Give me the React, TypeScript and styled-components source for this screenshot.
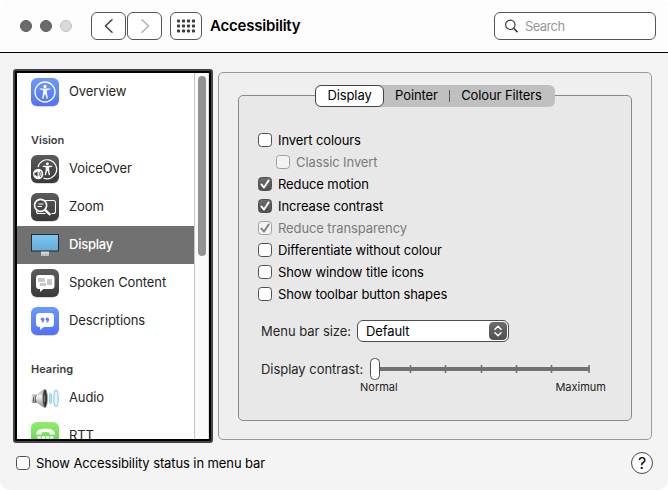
import React from 'react'
import styled, { createGlobalStyle, css } from 'styled-components'

const GlobalStyle = createGlobalStyle`
    * {
        box-sizing: border-box;
    }

    body {
        margin: 0;
        background: #fff;
        font-family: Inter, 'Liberation Sans', sans-serif;
        font-size: 13px;
        color: #000;
    }
`

const Window = styled.div`
    width: 668px;
    height: 490px;
    display: flex;
    flex-direction: column;
    background: #f4f4f4;
    border-radius: 10px;
    overflow: hidden;
`

const Toolbar = styled.header`
    height: 53px;
    flex: none;
    display: flex;
    align-items: center;
    padding: 0 12px 0 20px;
    background: #fdfdfd;
    border-bottom: 1px solid #000;
`

const Lights = styled.div`
    display: flex;
    gap: 8px;
    margin-right: 19px;
`

const Light = styled.span<{ $off?: boolean }>`
    width: 12px;
    height: 12px;
    border-radius: 50%;
    background: ${p => (p.$off ? '#dadada' : '#6b6b6b')};
    border: 1px solid ${p => (p.$off ? '#c2c2c2' : '#5c5c5c')};
`

const ToolButton = styled.button<{ $width: number; $gap: number }>`
    width: ${p => p.$width}px;
    height: 28px;
    margin: 0 ${p => p.$gap}px 0 0;
    padding: 0;
    display: flex;
    align-items: center;
    justify-content: center;
    background: #fff;
    border: 1px solid #555;
    border-radius: 6px;
`

const Title = styled.h1`
    margin: 0;
    flex: 1;
    font-size: 15px;
    line-height: 18px;
    padding-bottom: 1px;
    font-weight: 600;
    letter-spacing: -0.2px;
`

const SearchField = styled.div`
    width: 162px;
    height: 28px;
    display: flex;
    align-items: center;
    gap: 7px;
    padding-left: 10px;
    background: #fff;
    border: 1px solid #555;
    border-radius: 6px;
    color: #999;
    letter-spacing: -0.6px;
`

const Main = styled.main`
    display: flex;
    gap: 5px;
    padding: 16px 16px 0 13px;
`

const Sidebar = styled.nav`
    width: 200px;
    height: 374px;
    display: flex;
    border: 2px solid #444;
    border-radius: 3px;
    background: #000;
    padding: 2px;
`

const List = styled.div`
    flex: 1;
    overflow: hidden;
    background: #fff;
`

const Heading = styled.div`
    height: 39px;
    padding: 22px 0 0 14px;
    font-size: 11px;
    line-height: 15px;
    font-weight: 600;
    color: #3c3c3c;
`

const Item = styled.div<{ $selected?: boolean }>`
    height: 38px;
    display: flex;
    align-items: center;
    gap: 10px;
    padding-left: 14px;
    color: #262626;
    letter-spacing: -0.1px;

    svg {
        flex: none;
        overflow: visible;
    }

    span {
        margin-top: -2px;
    }

    ${p =>
        p.$selected &&
        css`
            background: #717171;
            color: #fff;

            span {
                font-weight: 500;
                letter-spacing: -0.25px;
            }
        `}
`

const ScrollTrack = styled.div`
    width: 15px;
    padding: 3px 2px 0 3px;
    background: #fafafa;
    border-left: 1px solid #c6c6c6;
    border-right: 1px solid #dedede;
`

const ScrollThumb = styled.div`
    width: 8px;
    height: 180px;
    border-radius: 4px;
    background: #929292;
`

const Panel = styled.section`
    width: 434px;
    height: 368px;
    margin-top: 3px;
    padding: 12px 19px 18px;
    display: flex;
    flex-direction: column;
    align-items: center;
    background: #efefef;
    border: 1px solid #999;
    border-radius: 5px;
`

const Tabs = styled.div`
    height: 22px;
    display: flex;
    align-items: center;
    background: #c0c0c0;
    border-radius: 6px;
    width: 240px;
    z-index: 1;
    letter-spacing: -0.1px;
`

const Tab = styled.div<{ $width: number; $active?: boolean }>`
    width: ${p => p.$width}px;
    height: 22px;
    line-height: 19px;
    text-align: center;
    border-radius: 6px;
    border: 1px solid ${p => (p.$active ? '#444' : 'transparent')};
    background: ${p => (p.$active ? '#fff' : 'transparent')};
`

const TabDivider = styled.span`
    width: 1px;
    height: 12px;
    background: #555;
`

const Group = styled.div`
    width: 394px;
    height: 326px;
    margin-top: -12px;
    flex: none;
    padding: 33px 0 0 19px;
    background: #e8e8e8;
    border: 1px solid #8a8a8a;
    border-radius: 5px;
`

const CheckRow = styled.label<{ $indent?: boolean; $disabled?: boolean }>`
    height: 22px;
    display: flex;
    align-items: center;
    gap: 6px;
    padding-left: ${p => (p.$indent ? 18 : 0)}px;
    color: ${p => (p.$disabled ? '#7b7b7b' : '#000')};
    letter-spacing: -0.1px;
    white-space: nowrap;
`

const Box = styled.span<{ $checked?: boolean; $disabled?: boolean }>`
    width: 14px;
    height: 14px;
    flex: none;
    display: flex;
    border: 1px solid #4e4e4e;
    border-radius: 3.5px;
    background: ${p => (p.$checked ? 'linear-gradient(#6c6c6c, #505050)' : '#fff')};

    ${p =>
        p.$disabled &&
        css`
            border-color: #a0a0a0;
            background: #f3f3f3;
        `}
`

const Field = styled.div<{ $top: number }>`
    height: 22px;
    margin-top: ${p => p.$top}px;
    padding-left: 3px;
    display: flex;
    align-items: center;
    color: #262626;
`

const FieldLabel = styled.span<{ $width: number }>`
    width: ${p => p.$width}px;
    padding-bottom: 1px;
    white-space: nowrap;
    letter-spacing: -0.04px;
`

const Select = styled.div`
    width: 152px;
    height: 22px;
    display: flex;
    align-items: center;
    justify-content: space-between;
    padding: 0 1px 0 8px;
    background: #fff;
    border: 1px solid #4e4e4e;
    border-radius: 6px;
    color: #000;
    letter-spacing: -0.1px;
`

const Stepper = styled.span`
    width: 18px;
    height: 18px;
    display: flex;
    border-radius: 4.5px;
    background: linear-gradient(#6c6c6c, #505050);
`

const SliderLabels = styled.div`
    display: flex;
    justify-content: space-between;
    width: 246px;
    margin-left: 102px;
    font-size: 11px;
    line-height: 14px;
    color: #1c1c1c;
`

const Footer = styled.footer`
    display: flex;
    align-items: center;
    justify-content: space-between;
    padding: 9px 15px 0 16px;
`

const Help = styled.button`
    width: 22px;
    height: 22px;
    padding: 0;
    border: 1px solid #4a4a4a;
    border-radius: 50%;
    background: #fff;
    font: 400 16px/20px Inter, sans-serif;
    color: #000;
`

interface TileProps {
    id: string
    from: string
    to: string
    children: React.ReactNode
}

const Tile: React.FC<TileProps> = ({ id, from, to, children }) => (
    <svg width="28" height="28" viewBox="0 0 28 28" fill="none">
        <defs>
            <linearGradient id={id} x1="0" y1="0" x2="0" y2="1">
                <stop stopColor={from} />
                <stop offset="1" stopColor={to} />
            </linearGradient>
        </defs>
        <rect y="0.8" width="28" height="28" rx="6" fill="#000" opacity="0.2" />
        <rect width="28" height="28" rx="6" fill={`url(#${id})`} />
        {children}
    </svg>
)

const Person = () => (
    <g fill="#fff">
        <circle cx="0" cy="-5.6" r="1.6" />
        <path d="M-5.2-3.6 H5.2 V-2.4 L1.9-1.8 V1 L2.9 6.5 L1.6 6.8 L.3 2 H-.3 L-1.6 6.8 L-2.9 6.5 L-1.9 1 V-1.8 L-5.2-2.4Z" />
    </g>
)

const OverviewIcon = () => (
    <Tile id="overview" from="#6b99ff" to="#5271fb">
        <circle cx="14" cy="14" r="10" stroke="#fff" strokeWidth="1.3" />
        <g transform="translate(14 14)">
            <Person />
        </g>
    </Tile>
)

const VoiceOverIcon = () => (
    <Tile id="voiceover" from="#5b5b5d" to="#393939">
        <path d="M7 12 A9.5 9.5 0 1 1 12.5 23" stroke="#fff" strokeWidth="1.2" />
        <g transform="translate(16.4 14) scale(.92)">
            <Person />
        </g>
        <circle cx="7.2" cy="19" r="5.2" fill="#fff" />
        <path d="M3.4 17.8h1.2l2-1.6v5.6l-2-1.6H3.4z" fill="#444" />
        <path d="M8 17.2q1 1.8 0 3.6M9.4 16q1.8 3 0 6" stroke="#444" strokeWidth="0.8" />
    </Tile>
)

const ZoomIcon = () => (
    <Tile id="zoom" from="#5b5b5d" to="#393939">
        <path d="M14 7.5h8.5a2 2 0 0 1 2 2v9a2 2 0 0 1-2 2h-2M5.5 18v.5a2 2 0 0 0 2 2h7" stroke="#fff" strokeWidth="1.1" />
        <circle cx="9.6" cy="12.4" r="6" fill="#484848" stroke="#fff" strokeWidth="1.6" />
        <path d="M14 16.8 L19.4 22" stroke="#fff" strokeWidth="2.4" />
        <path d="M7.5 11h5M6.5 13.5h4.5" stroke="#fff" strokeWidth="1.1" />
    </Tile>
)

const DisplayIcon = () => (
    <svg width="28" height="28" viewBox="0 0 28 28" fill="none">
        <defs>
            <linearGradient id="screen" x1="0" y1="0" x2="0" y2="1">
                <stop stopColor="#7cc8f3" />
                <stop offset="1" stopColor="#67a9d6" />
            </linearGradient>
        </defs>
        <rect x="10" y="20" width="8" height="5" fill="#d9d9d9" />
        <path d="M10 22.8h8V25h-8z" fill="#bdbdbd" />
        <rect x="0.5" y="3.5" width="27" height="16.5" fill="url(#screen)" stroke="#252b30" />
    </svg>
)

const SpokenIcon = () => (
    <Tile id="spoken" from="#5b5b5d" to="#393939">
        <path d="M8 6h12.5a3 3 0 0 1 3 3v8a3 3 0 0 1-3 3H12.5L9 23v-3H8a3 3 0 0 1-3-3V9a3 3 0 0 1 3-3z" fill="#fff" />
        <path d="M7 9h7v4H7zM16 10h5v6h-5zM9 14h6v3H9z" fill="#c8c8c8" />
    </Tile>
)

const DescriptionsIcon = () => (
    <Tile id="descriptions" from="#6b99ff" to="#5271fb">
        <path d="M8.5 6h11a3.5 3.5 0 0 1 3.5 3.5v7a3.5 3.5 0 0 1-3.5 3.5H13L9 23v-3h-.5A3.5 3.5 0 0 1 5 16.5v-7A3.5 3.5 0 0 1 8.5 6z" fill="#fff" />
        <circle cx="11.5" cy="12.3" r="1.7" fill="#5a80fc" />
        <circle cx="16.3" cy="12.3" r="1.7" fill="#5a80fc" />
        <path d="M12.7 12.3q0 2.5-1.9 3M17.5 12.3q0 2.5-1.9 3" stroke="#5a80fc" strokeWidth="1.1" />
    </Tile>
)

const AudioIcon = () => (
    <svg width="28" height="28" viewBox="0 0 28 28" fill="none">
        <defs>
            <linearGradient id="cone" x1="0" y1="0" x2="0" y2="1">
                <stop stopColor="#a0a0a0" />
                <stop offset="0.4" stopColor="#f4f4f4" />
                <stop offset="1" stopColor="#808080" />
            </linearGradient>
        </defs>
        <path d="M1.5 10.5 H6 V19 H1.5 Q-.6 14.8 1.5 10.5z" fill="url(#cone)" />
        <path d="M2.5 13v4M4.3 12v6" stroke="#444" strokeWidth="0.9" />
        <path d="M6 10 L13.5 5 V24 L6 19z" fill="url(#cone)" />
        <ellipse cx="14" cy="14.5" rx="2.5" ry="9.3" fill="#333" stroke="#a7a7a7" strokeWidth="0.8" />
        <ellipse cx="13.4" cy="14.5" rx="0.9" ry="4" fill="#777" />
        <ellipse cx="19.5" cy="14.5" rx="1.3" ry="5.3" fill="#b4e0f0" stroke="#8cc6db" strokeWidth="0.8" />
        <ellipse cx="25" cy="14.3" rx="2.2" ry="8.2" fill="#e4f7fc" stroke="#93cbe0" strokeWidth="1.2" />
    </svg>
)

const RttIcon = () => (
    <Tile id="rtt" from="#96eb70" to="#4fcf45">
        <path d="M5 12.5 Q4.8 6.5 14.5 6.5 T24 12.5 H18.5 V10.5 Q14.5 9.5 10.5 10.5 V12.5z" fill="#fff" />
        <path d="M6.5 15.5h16" stroke="#fff" strokeWidth="2.4" strokeDasharray="3.2 1" />
        <path d="M6.5 19h16" stroke="#fff" strokeWidth="2.4" strokeDasharray="3.2 1" />
    </Tile>
)

const Tick = ({ color = '#fff' }: { color?: string }) => (
    <svg width="12" height="12" viewBox="0 0 12 12" fill="none">
        <path d="M2.4 6.4 L5 9.6 L9.6 2.4" stroke={color} strokeWidth="1.9" strokeLinecap="round" strokeLinejoin="round" />
    </svg>
)

const options = [
    { label: 'Invert colours' },
    { label: 'Classic Invert', indent: true, disabled: true },
    { label: 'Reduce motion', checked: true },
    { label: 'Increase contrast', checked: true },
    { label: 'Reduce transparency', checked: true, disabled: true },
    { label: 'Differentiate without colour' },
    { label: 'Show window title icons' },
    { label: 'Show toolbar button shapes' },
]

const ticks = [40.5, 75.5, 111.5, 146.5, 181.5, 219]

const Slider = () => (
    <svg width="222" height="22" viewBox="0 0 222 22" fill="none">
        <path d="M6 11H220" stroke="#70726f" strokeWidth="4" />
        {ticks.map(x => (
            <path key={x} d={`M${x} 7v8`} stroke="#70726f" strokeWidth="1.6" />
        ))}
        <rect x="0.5" y="0.5" width="9" height="21" rx="4" fill="#fff" stroke="#4e4e4e" />
    </svg>
)

const App: React.FC = () => (
    <>
        <GlobalStyle />
        <Window>
            <Toolbar>
                <Lights>
                    <Light />
                    <Light />
                    <Light $off />
                </Lights>
                <ToolButton $width={35} $gap={1}>
                    <svg width="10" height="16" viewBox="0 0 10 16" fill="none">
                        <path d="M8 1.8 L1.4 8 L8 14.2" stroke="#3c3c3c" strokeWidth="1.5" strokeLinecap="round" strokeLinejoin="round" />
                    </svg>
                </ToolButton>
                <ToolButton $width={35} $gap={8}>
                    <svg width="10" height="16" viewBox="0 0 10 16" fill="none">
                        <path d="M2 1.8 L8.6 8 L2 14.2" stroke="#b0b0b0" strokeWidth="1.5" strokeLinecap="round" strokeLinejoin="round" />
                    </svg>
                </ToolButton>
                <ToolButton $width={32} $gap={8}>
                    <svg width="18" height="14" viewBox="0 0 18 14" fill="#3c3c3c">
                        {[0, 5, 10].map(y =>
                            [0, 5, 10, 15].map(x => <rect key={`${x}-${y}`} x={x} y={y + 0.5} width="3" height="3" rx="0.7" />)
                        )}
                    </svg>
                </ToolButton>
                <Title>Accessibility</Title>
                <SearchField>
                    <svg width="13" height="14" viewBox="0 0 13 14" fill="none" stroke="#3c3c3c" strokeLinecap="round">
                        <circle cx="5.3" cy="5.8" r="4.7" strokeWidth="1.2" />
                        <path d="M8.8 9.3 L12 12.6" strokeWidth="1.6" />
                    </svg>
                    <span>Search</span>
                </SearchField>
            </Toolbar>
            <Main>
                <Sidebar>
                    <List>
                        <Item><OverviewIcon /><span>Overview</span></Item>
                        <Heading>Vision</Heading>
                        <Item><VoiceOverIcon /><span>VoiceOver</span></Item>
                        <Item><ZoomIcon /><span>Zoom</span></Item>
                        <Item $selected><DisplayIcon /><span>Display</span></Item>
                        <Item><SpokenIcon /><span>Spoken Content</span></Item>
                        <Item><DescriptionsIcon /><span>Descriptions</span></Item>
                        <Heading>Hearing</Heading>
                        <Item><AudioIcon /><span>Audio</span></Item>
                        <Item><RttIcon /><span>RTT</span></Item>
                    </List>
                    <ScrollTrack>
                        <ScrollThumb />
                    </ScrollTrack>
                </Sidebar>
                <Panel>
                    <Tabs>
                        <Tab $width={69} $active>Display</Tab>
                        <Tab $width={65}>Pointer</Tab>
                        <TabDivider />
                        <Tab $width={103}>Colour Filters</Tab>
                    </Tabs>
                    <Group>
                        {options.map(o => (
                            <CheckRow key={o.label} $indent={o.indent} $disabled={o.disabled}>
                                <Box $checked={o.checked} $disabled={o.disabled}>
                                    {o.checked && <Tick color={o.disabled ? '#808080' : '#fff'} />}
                                </Box>
                                <span>{o.label}</span>
                            </CheckRow>
                        ))}
                        <Field $top={15}>
                            <FieldLabel $width={96}>Menu bar size:</FieldLabel>
                            <Select>
                                Default
                                <Stepper>
                                    <svg width="18" height="18" viewBox="0 0 18 18" fill="none">
                                        <path d="M6 7.3 L9 4.3 L12 7.3 M6 10.7 L9 13.7 L12 10.7" stroke="#fff" strokeWidth="1.5" strokeLinecap="round" strokeLinejoin="round" />
                                    </svg>
                                </Stepper>
                            </Select>
                        </Field>
                        <Field $top={16}>
                            <FieldLabel $width={109}>Display contrast:</FieldLabel>
                            <Slider />
                        </Field>
                        <SliderLabels>
                            <span>Normal</span>
                            <span>Maximum</span>
                        </SliderLabels>
                    </Group>
                </Panel>
            </Main>
            <Footer>
                <CheckRow>
                    <Box />
                    <span>Show Accessibility status in menu bar</span>
                </CheckRow>
                <Help>?</Help>
            </Footer>
        </Window>
    </>
)

export default App
